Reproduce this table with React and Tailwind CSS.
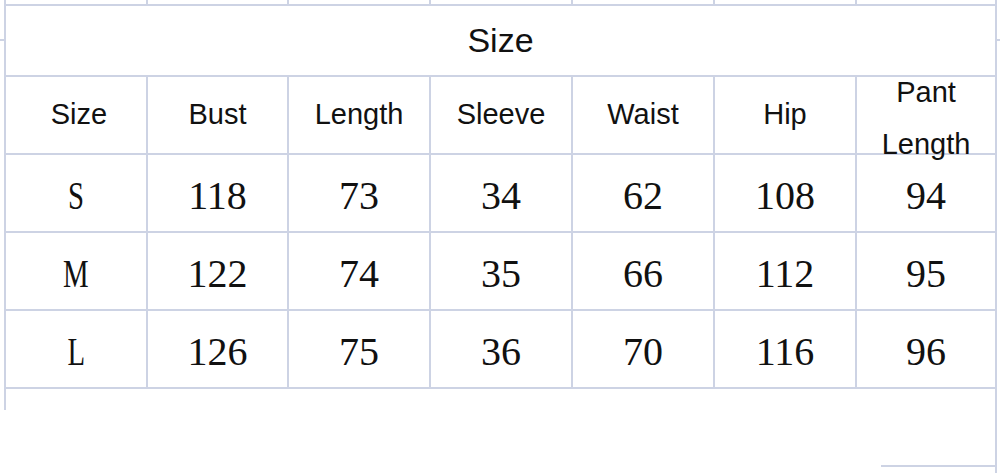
import React from "react";

const heads = ["Size", "Bust", "Length", "Sleeve", "Waist", "Hip"];

const rows = [
  ["S", "118", "73", "34", "62", "108", "94"],
  ["M", "122", "74", "35", "66", "112", "95"],
  ["L", "126", "75", "36", "70", "116", "96"],
];

const sans = { fontFamily: '"Liberation Sans", Arial, sans-serif' };

export default function App() {
  return (
    <div className="w-[1000px] h-[473px] bg-white overflow-hidden flex">
      {/* left edge tick */}
      <div className="w-[4px] shrink-0">
        <div className="mt-[39px] h-[2px] w-[4px] bg-[#cdd3e4]" />
      </div>

      <div className="flex flex-col">
        {/* table */}
        <div className="grid grid-cols-[140px_139px_140px_140px_140px_140px_138px] grid-rows-[4px_69px_76px_76px_76px_76px] gap-[2px] bg-[#cdd3e4] px-[2px] pb-[2px] text-[#111]">
          {Array.from({ length: 7 }).map((_, i) => (
            <div key={"g" + i} className="bg-white" />
          ))}

          <div
            className="col-span-7 bg-white flex items-center justify-center text-[34px]"
            style={sans}
          >
            Size
          </div>

          {heads.map((h, i) => (
            <div
              key={h}
              className={
                "bg-white flex items-center justify-center text-[29px]" +
                (i === 0 ? " pl-[6px]" : "")
              }
              style={sans}
            >
              {h}
            </div>
          ))}
          <div
            className="relative z-10 bg-white flex items-center justify-center text-[29px] leading-[52px] text-center"
            style={sans}
          >
            <div className="mt-[6px] whitespace-nowrap">
              Pant
              <br />
              Length
            </div>
          </div>

          {rows.map((r) =>
            r.map((v, j) => (
              <div
                key={r[0] + j}
                className="bg-white flex items-center justify-center pt-[5px] text-[40px] font-['Liberation_Serif',serif]"
              >
                <span className={j === 0 ? "inline-block scale-x-[0.72]" : ""}>
                  {v}
                </span>
              </div>
            ))
          )}
        </div>

        {/* loose grid lines below the table */}
        <div className="flex justify-between items-start">
          <div className="w-[2px] h-[21px] bg-[#cdd3e4]" />
          <div className="flex items-start">
            <div className="w-[114px] h-[2px] mt-[76px] bg-[#cdd3e4]" />
            <div className="w-[2px] h-[84px] bg-[#cdd3e4]" />
          </div>
        </div>
      </div>

      {/* right edge tick */}
      <div className="w-[3px] shrink-0">
        <div className="mt-[39px] h-[2px] w-[3px] bg-[#cdd3e4]" />
      </div>
    </div>
  );
}
